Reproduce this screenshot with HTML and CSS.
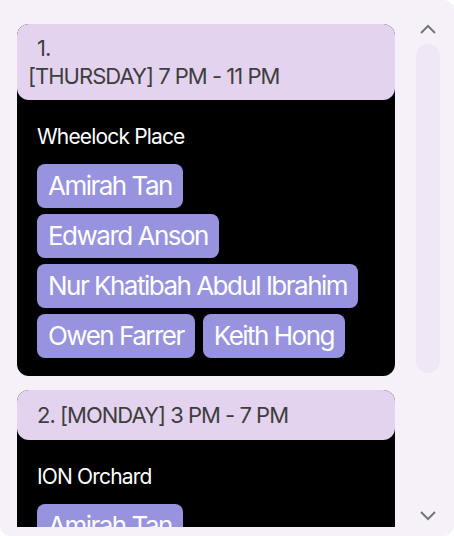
FILE: index.html
```html
<!DOCTYPE html>
<html>
<head>
<meta charset="utf-8">
<link rel="stylesheet" href="styles.css">
</head>
<body>
<div class="panel">
  <div class="scroll">
    <div class="list">
      <div class="card">
        <div class="card-head wrapped">
          <div class="line first">1.</div>
          <div class="line">[THURSDAY] 7 PM - 11 PM</div>
        </div>
        <div class="card-body">
          <div class="place">Wheelock Place</div>
          <div class="chips">
            <span class="chip">Amirah Tan</span>
            <span class="chip">Edward Anson</span>
            <span class="chip">Nur Khatibah Abdul Ibrahim</span>
            <span class="chip">Owen Farrer</span>
            <span class="chip">Keith Hong</span>
          </div>
        </div>
      </div>
      <div class="card">
        <div class="card-head">
          <div class="line first">2. [MONDAY] 3 PM - 7 PM</div>
        </div>
        <div class="card-body">
          <div class="place">ION Orchard</div>
          <div class="chips">
            <span class="chip">Amirah Tan</span>
            <span class="chip">Edward Anson</span>
          </div>
        </div>
      </div>
    </div>
  </div>
  <div class="scrollbar">
    <svg class="arrow" width="20" height="12" viewBox="0 0 20 12"><path d="M3 10 L10 3 L17 10" fill="none" stroke="#777" stroke-width="2"/></svg>
    <div class="thumb"></div>
    <div class="spacer"></div>
    <svg class="arrow" width="20" height="12" viewBox="0 0 20 12"><path d="M3 2 L10 9 L17 2" fill="none" stroke="#777" stroke-width="2"/></svg>
  </div>
</div>
</body>
</html>
```

FILE: styles.css
```css
html, body {
  margin: 0;
  padding: 0;
  background: #ffffff;
}
body {
  font-family: Inter, "Noto Sans", sans-serif;
}
.panel {
  width: 454px;
  height: 536px;
  background: #f6f1f9;
  border-radius: 0 10px 11px 11px;
  display: flex;
  overflow: hidden;
}
.scroll {
  width: 395px;
  height: 527px;
  overflow: hidden;
  box-sizing: border-box;
  padding: 24px 0 0 17px;
}
.list {
  display: flex;
  flex-direction: column;
  gap: 14px;
  width: 378px;
}
.card {
  background: #000;
  border-radius: 12px;
}
.card-head {
  background: #e3d3ee;
  border-radius: 12px;
  color: #3e3e3e;
  font-size: 22px;
  line-height: 28px;
  letter-spacing: -0.045em;
  padding: 11px 0;
}
.card-head.wrapped {
  padding: 10px 0 10px 0;
}
.line {
  padding-left: 11px;
  white-space: nowrap;
}
.line.first {
  padding-left: 20px;
}
.card-body {
  padding: 25px 33px 18px 20px;
}
.place {
  color: #fff;
  font-size: 21px;
  line-height: 24px;
  letter-spacing: -0.04em;
  margin-bottom: 15px;
}
.chips {
  display: flex;
  flex-wrap: wrap;
  gap: 6px 8px;
}
.chip {
  background: #9893de;
  color: #fff;
  font-size: 26px;
  letter-spacing: -0.058em;
  height: 44px;
  line-height: 44px;
  padding: 0 11px;
  border-radius: 8px;
  white-space: nowrap;
}
.scrollbar {
  width: 24px;
  margin-left: 21px;
  display: flex;
  flex-direction: column;
  align-items: center;
  padding: 23px 0 14px 0;
}
.arrow {
  display: block;
  flex: none;
}
.thumb {
  width: 24px;
  height: 329px;
  margin-top: 9px;
  background: #efe7f6;
  border-radius: 12px;
}
.spacer {
  flex: 1;
}
```
